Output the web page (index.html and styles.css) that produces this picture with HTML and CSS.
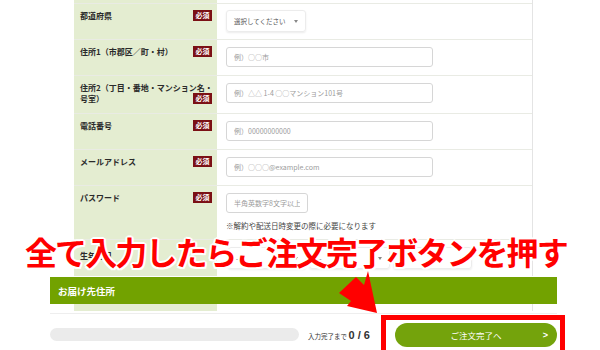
FILE: index.html
```html
<!DOCTYPE html>
<html lang="ja">
<head>
    <meta charset="UTF-8">
    <meta name="viewport" content="width=device-width, initial-scale=1.0">
    <title>ご注文手続き</title>
    <link rel="stylesheet" href="styles.css">
</head>
<body>
<div class="page">
    <main class="scroll">
        <section class="sec">
            <div class="table">
                <div class="row row-cut"><div class="th"></div><div class="td"></div></div>

                <div class="row">
                    <div class="th"><span class="lbl">都道府県</span><span class="req">必須</span></div>
                    <div class="td td-select">
                        <div class="select select-pref"><span>選択してください</span><span class="caret"></span></div>
                    </div>
                </div>

                <div class="row">
                    <div class="th"><span class="lbl">住所1（市郡区／町・村）</span><span class="req">必須</span></div>
                    <div class="td"><input class="input" type="text" placeholder="例）○○市"></div>
                </div>

                <div class="row">
                    <div class="th"><span class="lbl">住所2（丁目・番地・マンション名・<br>号室）</span><span class="req">必須</span></div>
                    <div class="td"><input class="input" type="text" placeholder="例）△△ 1-4 ○○マンション101号"></div>
                </div>

                <div class="row">
                    <div class="th"><span class="lbl">電話番号</span><span class="req">必須</span></div>
                    <div class="td"><input class="input" type="text" placeholder="例）00000000000"></div>
                </div>

                <div class="row">
                    <div class="th"><span class="lbl">メールアドレス</span><span class="req">必須</span></div>
                    <div class="td"><input class="input" type="text" placeholder="例）○○○@example.com"></div>
                </div>

                <div class="row">
                    <div class="th"><span class="lbl">パスワード</span><span class="req">必須</span></div>
                    <div class="td">
                        <input class="input input-short" type="password" placeholder="半角英数字8文字以上">
                        <p class="note">※解約や配送日時変更の際に必要になります</p>
                    </div>
                </div>

                <div class="row">
                    <div class="th th-low"><span class="lbl">生年月日</span></div>
                    <div class="td td-select td-dates">
                        <div class="select select-y"><span>----</span><span class="caret"></span></div>
                        <div class="select select-m"><span>--</span><span class="caret"></span></div>
                        <div class="select select-d"><span>--</span><span class="caret"></span></div>
                    </div>
                </div>
            </div>
        </section>

        <section class="sec">
            <h2 class="sec-head">お届け先住所</h2>
            <div class="table">
                <div class="row row-cut row-cut-low"><div class="th"></div><div class="td"></div></div>
            </div>
        </section>
    </main>

    <footer class="footer">
        <div class="progress"></div>
        <p class="count">入力完了まで <b>0 / 6</b></p>
        <button class="submit" type="button"><span></span><span>ご注文完了へ</span><span class="chev">&gt;</span></button>
    </footer>

    <!-- 説明用の注記 -->
    <p class="callout">全て入力したらご注文完了ボタンを押す</p>
    <svg class="arrow" viewBox="0 0 600 350" width="600" height="350">
        <path d="M356 277 L339 293 L351 301 L347 306 L377 313 L368 271 L364 285 Z" fill="#ff0000"/>
    </svg>
    <div class="highlight"></div>
</div>
</body>
</html>
```

FILE: styles.css
```css
body {
    margin: 0;
    font-family: "Noto Sans CJK JP", "Noto Sans", sans-serif;
    background-color: #fff;
    color: #333;
    overflow: hidden;
}

.page {
    position: relative;
    width: 600px;
    height: 350px;
    overflow: hidden;
}

/* フォーム部分 */
.scroll {
    height: 313px;
    overflow: hidden;
}

.sec {
    width: 507px;
    margin-left: 50px;
}

.table {
    margin: 0 24px;
    border-right: 1px solid #e4e4e4;
}

.row {
    display: grid;
    grid-template-columns: 143px 1fr;
    border-top: 1px solid #e9ebe4;
}

.row-cut {
    height: 3px;
    border-top: 0;
}
.row-cut-low {
    height: 7px;
}
.row-cut .th,
.row-cut .td {
    padding: 0;
}

.th {
    display: grid;
    grid-template-columns: 1fr auto;
    align-content: start;
    background-color: #e4edd1;
    padding: 6px 5px 9px 6px;
    font-size: 8px;
    font-weight: bold;
    line-height: 11px;
    color: #2a2a2a;
}
.th-low {
    padding-top: 10px;
}

.lbl {
    grid-area: 1 / 1 / 2 / 3;
    white-space: nowrap;
}

.req {
    grid-area: 1 / 2 / 2 / 3;
    align-self: end;
    background-color: #7b1015;
    color: #fff;
    font-size: 7px;
    line-height: 11px;
    padding: 0 2.5px;
}

.td {
    padding: 7px 9px 8px;
}
.td-select {
    padding: 6px 9px 7px;
}
.td-dates {
    display: flex;
    gap: 3px;
    padding-top: 7px;
    padding-left: 11px;
}

.input {
    display: block;
    box-sizing: border-box;
    width: 207px;
    height: 20px;
    margin: 0;
    padding: 0 7px;
    border: 1px solid #d6d6d6;
    border-radius: 3px;
    font-family: inherit;
    font-size: 7px;
    color: #333;
}
.input::placeholder {
    color: #9b9b9b;
}
.input-short {
    width: 82px;
}

.note {
    margin: 7px 0 0;
    font-size: 7.5px;
    line-height: 11px;
    color: #444;
}

.select {
    display: flex;
    align-items: center;
    justify-content: space-between;
    box-sizing: border-box;
    width: 80px;
    height: 22px;
    padding: 0 7px;
    border: 1px solid #ececec;
    border-radius: 3px;
    box-shadow: 0 1px 2px rgba(0, 0, 0, 0.08);
    font-size: 6.5px;
    color: #555;
}
.select-y { width: 78px; }
.select-m { width: 81px; }
.select-d { width: 79px; }

.caret {
    width: 0;
    height: 0;
    border-left: 2.5px solid transparent;
    border-right: 2.5px solid transparent;
    border-top: 3px solid #888;
}

.sec-head {
    display: flex;
    align-items: center;
    height: 27px;
    margin: 1px 0 0;
    padding-left: 8px;
    background-color: #72a200;
    color: #fff;
    font-size: 9.5px;
    font-weight: bold;
}

/* 下部の固定バー */
.footer {
    display: flex;
    align-items: center;
    box-sizing: border-box;
    width: 507px;
    height: 42px;
    margin-left: 50px;
    border-top: 1px solid #eeeeee;
}

.progress {
    width: 249px;
    height: 13px;
    border-radius: 7px;
    background-color: #ebebeb;
}

.count {
    margin: 0 0 0 9px;
    font-size: 6.5px;
    color: #333;
    white-space: nowrap;
}
.count b {
    font-size: 11px;
    font-family: "Liberation Sans", sans-serif;
}

.submit {
    display: grid;
    grid-template-columns: 1fr auto 1fr;
    align-items: center;
    width: 162px;
    height: 24px;
    margin-left: auto;
    padding: 0 9px;
    border: 0;
    border-radius: 12px;
    background-color: #74a30c;
    color: #fff;
    font-family: inherit;
    font-size: 8.5px;
}
.chev {
    justify-self: end;
    font-family: "Liberation Sans", sans-serif;
    font-weight: bold;
    font-size: 9px;
}

/* 注記・矢印・枠 */
.callout {
    position: absolute;
    left: 25px;
    top: 235px;
    margin: 0;
    font-size: 32px;
    line-height: 32px;
    font-weight: bold;
    letter-spacing: -1.9px;
    color: #ff0000;
    white-space: nowrap;
    text-shadow:
        2px 0 0 #fff, -2px 0 0 #fff, 0 2px 0 #fff, 0 -2px 0 #fff,
        1.5px 1.5px 0 #fff, -1.5px 1.5px 0 #fff, 1.5px -1.5px 0 #fff, -1.5px -1.5px 0 #fff;
}

.arrow {
    position: absolute;
    left: 0;
    top: 0;
    pointer-events: none;
}

.highlight {
    position: absolute;
    left: 381px;
    top: 315px;
    width: 174px;
    height: 40px;
    border: 5px solid #ff0000;
}
```
